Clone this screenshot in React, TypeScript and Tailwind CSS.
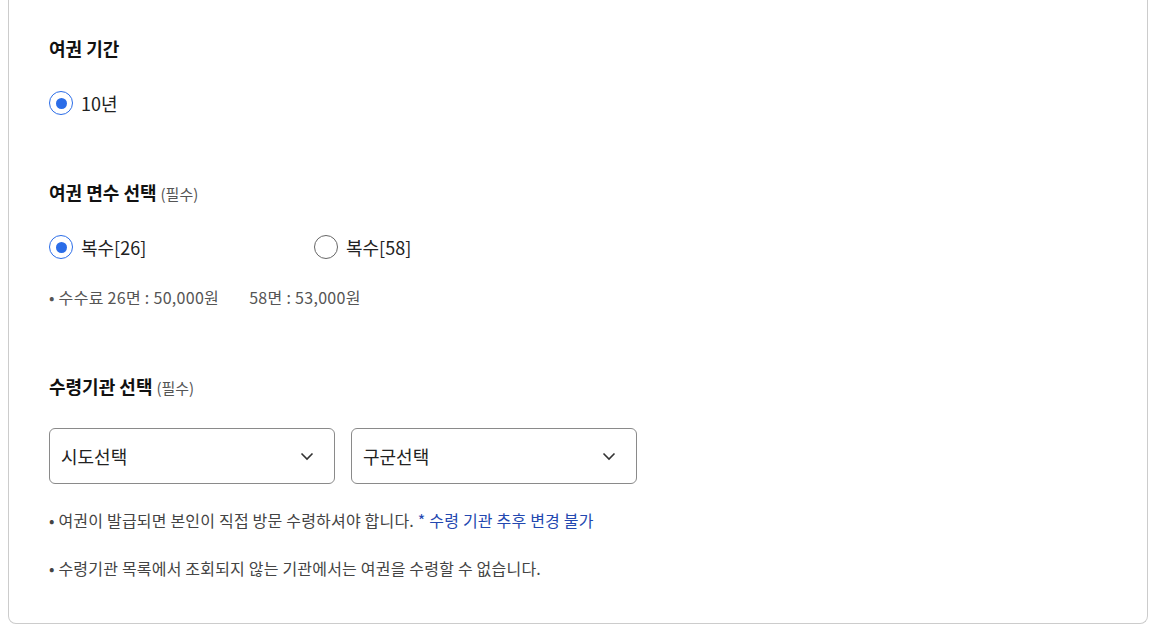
import React from "react"

const FONT = "font-['Noto_Sans_CJK_KR','Noto_Sans',sans-serif]"

function Radio({ checked, label }: { checked?: boolean; label: string }) {
  return (
    <label className="flex items-center gap-2 cursor-pointer">
      <span
        className={
          "flex h-6 w-6 items-center justify-center rounded-full border-[1.5px] " +
          (checked ? "border-[#2b6de8]" : "border-[#666666]")
        }
      >
        {checked && <span className="h-[11px] w-[11px] rounded-full bg-[#2b6de8]" />}
      </span>
      <span className="text-[18px] text-[#222222] leading-6">{label}</span>
    </label>
  )
}

function Select({ placeholder }: { placeholder: string }) {
  return (
    <div className="flex h-[56px] w-[286px] items-center justify-between rounded-md border border-[#8a8a8a] pl-[11px] pr-5">
      <span className="text-[18px] text-[#222222]">{placeholder}</span>
      <svg width="14" height="9" viewBox="0 0 14 9" fill="none">
        <path d="M1.5 1.5L7 7L12.5 1.5" stroke="#333333" strokeWidth="1.6" />
      </svg>
    </div>
  )
}

function Title({ text, required }: { text: string; required?: boolean }) {
  return (
    <h3 className="flex items-baseline gap-1 text-[18px] leading-6 font-bold text-[#111111]">
      {text}
      {required && <span className="text-[15px] font-normal text-[#555555]">(필수)</span>}
    </h3>
  )
}

export default function App() {
  return (
    <div className={"min-h-screen bg-white pb-[10px] " + FONT}>
      <div className="ml-2 w-[1140px] rounded-b-lg border-x border-b border-[#cccccc] px-10 pt-[36px] pb-[43px]">
        {/* 여권 기간 */}
        <section>
          <Title text="여권 기간" />
          <div className="mt-[31px]">
            <Radio checked label="10년" />
          </div>
        </section>

        {/* 여권 면수 선택 */}
        <section className="mt-[65px]">
          <Title text="여권 면수 선택" required />
          <div className="mt-[29px] flex">
            <div className="w-[265px]">
              <Radio checked label="복수[26]" />
            </div>
            <Radio label="복수[58]" />
          </div>
          <p className="mt-[26px] text-[16px] leading-6 tracking-[0.3px] text-[#555555]">
            • 수수료 26면 : 50,000원<span className="ml-[30px]">58면 : 53,000원</span>
          </p>
        </section>

        {/* 수령기관 선택 */}
        <section className="mt-[65px]">
          <Title text="수령기관 선택" required />
          <div className="mt-[28px] flex gap-4">
            <Select placeholder="시도선택" />
            <Select placeholder="구군선택" />
          </div>
          <p className="mt-[24px] text-[16px] leading-6 tracking-[0.2px] text-[#444444]">
            • 여권이 발급되면 본인이 직접 방문 수령하셔야 합니다.{" "}
            <span className="text-[#2348b0]">* 수령 기관 추후 변경 불가</span>
          </p>
          <p className="mt-[24px] text-[16px] leading-6 tracking-[0.2px] text-[#444444]">
            • 수령기관 목록에서 조회되지 않는 기관에서는 여권을 수령할 수 없습니다.
          </p>
        </section>
      </div>
    </div>
  )
}
